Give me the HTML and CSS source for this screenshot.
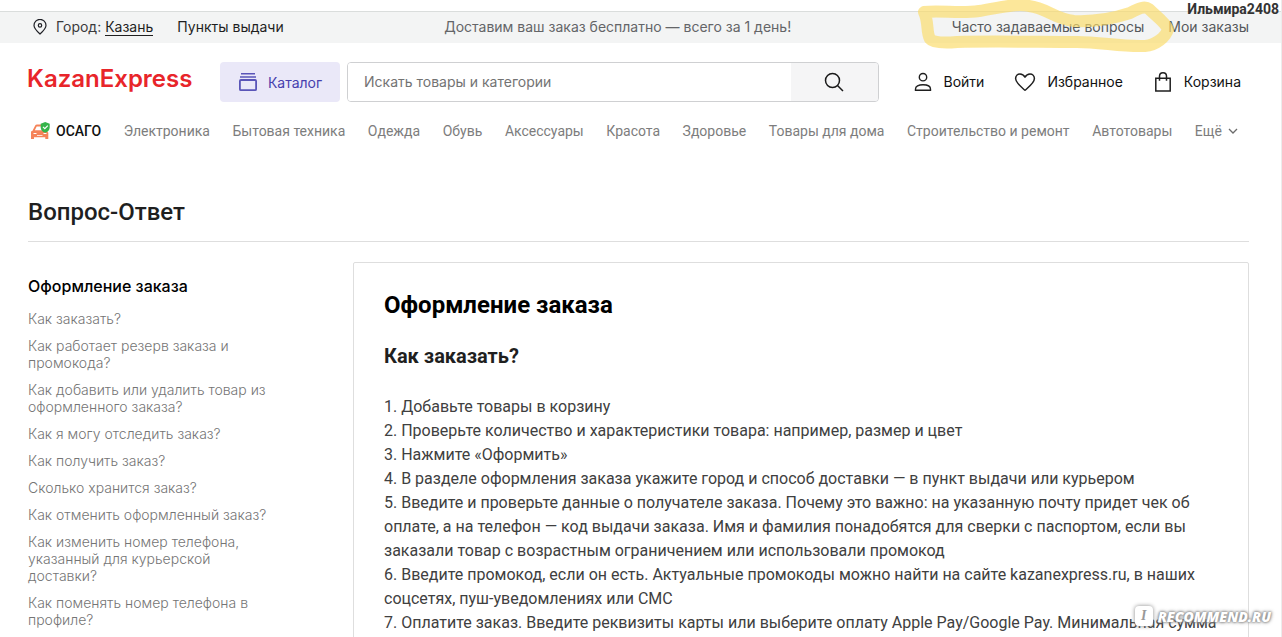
FILE: index.html
```html
<!DOCTYPE html>
<html lang="ru">
<head>
<meta charset="utf-8">
<title>Вопрос-Ответ — KazanExpress</title>
<link rel="stylesheet" href="styles.css">
</head>
<body>
<div class="page">
  <div class="topbar">
    <div class="topbar-left">
      <svg class="pin" width="14" height="16" viewBox="0 0 14 16" fill="none" stroke="#1f2026" stroke-width="1.2"><path d="M7 15C3.6 11.8 1 9.2 1 6.4a6 6 0 0 1 12 0C13 9.2 10.400 11.8 7 15z"/><circle cx="7" cy="6.400" r="1.700"/></svg>
      <span class="city">Город: <a href="#">Казань</a></span>
      <a href="#" class="points">Пункты выдачи</a>
    </div>
    <span class="promo">Доставим ваш заказ бесплатно — всего за 1 день!</span>
    <div class="topbar-right">
      <a href="#">Часто задаваемые вопросы</a>
      <a href="#">Мои заказы</a>
    </div>
  </div>

  <header class="header">
    <a href="#" class="logo">KazanExpress</a>
    <button class="catalog" type="button">
      <svg width="20" height="20" viewBox="0 0 20 20" fill="none" stroke="#5a55b8"><path d="M3 1.700h14M2 5h16" stroke-width="1.600"/><rect x="1.900" y="8" width="16.200" height="10.200" rx="1" stroke-width="1.800"/></svg>
      Каталог
    </button>
    <form class="search">
      <input type="text" aria-label="Поиск" placeholder="Искать товары и категории">
      <button type="button" aria-label="Найти">
        <svg width="20" height="20" viewBox="0 0 20 20" fill="none" stroke="#1a1a1a" stroke-width="1.500"><circle cx="8.500" cy="8.500" r="7"/><path d="M13.500 13.500l5.500 5.500"/></svg>
      </button>
    </form>
    <div class="actions">
      <a href="#"><svg width="20" height="20" viewBox="0 0 20 20" fill="none" stroke="#1f1f1f" stroke-width="1.400"><circle cx="10" cy="5.200" r="3.700"/><path d="M2.500 18.300v-1.200c0-2.600 3-4.300 7.500-4.300s7.500 1.700 7.500 4.300v1.200z"/></svg>Войти</a>
      <a href="#"><svg width="22" height="20" viewBox="0 0 22 20" fill="none" stroke="#1f1f1f" stroke-width="1.500" stroke-linejoin="round"><path d="M11 18.300C7 14.800 1.600 11 1.600 6.600 1.600 3.800 3.600 2 6 2c2.100 0 3.900 1.200 5 3.200C12.100 3.200 13.900 2 16 2c2.400 0 4.400 1.800 4.400 4.600C20.400 11 15 14.800 11 18.300z"/></svg>Избранное</a>
      <a href="#"><svg width="20" height="22" viewBox="0 0 20 22" fill="none" stroke="#1f1f1f" stroke-width="1.500"><path d="M2.800 7.200h14.400V20H2.800z"/><path d="M6.500 9.700V5.300C6.500 3.300 8 1.800 10 1.800s3.500 1.500 3.500 3.500v4.400"/></svg>Корзина</a>
    </div>
  </header>

  <nav class="nav">
    <a href="#" class="osago"><svg width="20" height="18" viewBox="0 0 20 18"><path d="M1 9.500l1.500-.8L5.200 3.500Q5.700 2.500 7 2.500h6l3.500 6.200 1.800 2V17h-3v-1.700H4V17H1z" fill="#f58359"/><path d="M4.800 8.300L6.700 4.500h6l2.300 3.800z" fill="#fff"/><path d="M3.500 11h3v1h-3zM13.500 11h3v1h-3zM7 13h5.500v.8H7z" fill="#fff"/><path d="M15.200 0l4.500 1.700v3.500c0 2.800-1.800 4.500-4.500 5.600-2.700-1.100-4.500-2.800-4.500-5.600V1.700z" fill="#35b44a"/><path d="M13 4.900l1.800 1.800 3-3" fill="none" stroke="#fff" stroke-width="1.200"/></svg>ОСАГО</a>
    <a href="#">Электроника</a>
    <a href="#">Бытовая техника</a>
    <a href="#">Одежда</a>
    <a href="#">Обувь</a>
    <a href="#">Аксессуары</a>
    <a href="#">Красота</a>
    <a href="#">Здоровье</a>
    <a href="#">Товары для дома</a>
    <a href="#">Строительство и ремонт</a>
    <a href="#">Автотовары</a>
    <button type="button" class="more">Ещё <svg width="10" height="8" viewBox="0 0 10 8" fill="none" stroke="#6b6b6b" stroke-width="1.300"><path d="M1 2l4 4 4-4"/></svg></button>
  </nav>

  <main class="main">
    <h1>Вопрос-Ответ</h1>
    <div class="columns">
      <aside class="sidebar">
        <h2>Оформление заказа</h2>
        <ul>
          <li><a href="#">Как заказать?</a></li>
          <li><a href="#">Как работает резерв заказа и промокода?</a></li>
          <li><a href="#">Как добавить или удалить товар из оформленного заказа?</a></li>
          <li><a href="#">Как я могу отследить заказ?</a></li>
          <li><a href="#">Как получить заказ?</a></li>
          <li><a href="#">Сколько хранится заказ?</a></li>
          <li><a href="#">Как отменить оформленный заказ?</a></li>
          <li><a href="#">Как изменить номер телефона, указанный для курьерской доставки?</a></li>
          <li><a href="#">Как поменять номер телефона в профиле?</a></li>
        </ul>
      </aside>
      <article class="card">
        <h2>Оформление заказа</h2>
        <h3>Как заказать?</h3>
        <ol>
          <li>1. Добавьте товары в корзину</li>
          <li>2. Проверьте количество и характеристики товара: например, размер и цвет</li>
          <li>3. Нажмите «Оформить»</li>
          <li>4. В разделе оформления заказа укажите город и способ доставки — в пункт выдачи или курьером</li>
          <li>5. Введите и проверьте данные о получателе заказа. Почему это важно: на указанную почту придет чек об оплате, а на телефон — код выдачи заказа. Имя и фамилия понадобятся для сверки с паспортом, если вы заказали товар с возрастным ограничением или использовали промокод</li>
          <li>6. Введите промокод, если он есть. Актуальные промокоды можно найти на сайте kazanexpress.ru, в наших соцсетях, пуш-уведомлениях или СМС</li>
          <li>7. Оплатите заказ. Введите реквизиты карты или выберите оплату Apple Pay/Google Pay. Минимальная сумма</li>
        </ol>
      </article>
    </div>
  </main>

  <svg class="marker" width="260" height="60" viewBox="0 0 260 60" fill="none" stroke="#fbdc6a" stroke-opacity=".68" stroke-width="12" stroke-linejoin="round"><path d="M7 12C25 10 42 14 62 11C82 8 98 3 112 6C130 8 137 19 157 21C180 22 198 18 213 13C222 8 228 6 232 9C239 16 248 22 251 29C249 37 239 45 228 46C204 47 184 42 160 42C122 42 76 41 40 42C28 43 16 43 13 39C9 32 12 22 7 12z"/></svg>
  <span class="author">Ильмира2408</span>
  <div class="watermark"><span class="watermark-badge">I</span>RECOMMEND.RU</div>
</div>
</body>
</html>
```
FILE: styles.css
```css
* { box-sizing: border-box; }
body {
  margin: 0;
  font-family: Inter, "Liberation Sans", sans-serif;
  font-size: 14px;
  color: #1f1f1f;
  background: #fff;
}
a { color: inherit; text-decoration: none; }
h1, h2, h3, ul, ol { margin: 0; padding: 0; }
ul, ol { list-style: none; }
button { font: inherit; color: inherit; border: 0; padding: 0; background: none; }
svg { flex: none; }

.page {
  position: relative;
  height: 100vh;
  overflow: hidden;
  padding-top: 11px;
  border-right: 1px solid #ececec;
}

.topbar {
  display: flex;
  justify-content: space-between;
  align-items: center;
  height: 32px;
  padding: 0 32px 2px 33px;
  border-top: 1px solid #dadddc;
  background: #f3f4f4;
}
.topbar-left { display: flex; align-items: center; }
.city { margin-left: 9px; color: #3a3a3c; }
.city a { color: #1f1f1f; border-bottom: 1px solid #1f1f1f; }
.points { margin-left: 24px; }
.promo { color: #646568; }
.topbar-right { display: flex; justify-content: flex-end; gap: 24px; color: #55585b; }

.header {
  display: flex;
  align-items: center;
  padding: 19px 40px 0 27px;
}
.logo {
  width: 193px;
  padding-bottom: 6px;
  font-size: 24px;
  line-height: 32px;
  font-weight: 600;
  color: #e8252a;
}
.catalog {
  display: flex;
  align-items: center;
  justify-content: center;
  gap: 10px;
  width: 120px;
  height: 40px;
  border-radius: 4px;
  background: #eae8f8;
  color: #463fae;
}
.search {
  display: flex;
  flex: 1;
  height: 40px;
  margin-left: 7px;
  border: 1px solid #cfd0d2;
  border-radius: 4px;
  overflow: hidden;
}
.search input {
  flex: 1;
  min-width: 0;
  padding: 0 16px 2px;
  border: 0;
  font: inherit;
  background: #fff;
}
.search input::placeholder { color: #737373; }
.search button {
  display: flex;
  align-items: center;
  justify-content: center;
  width: 87px;
  background: #f5f5f6;
}
.actions { display: flex; gap: 30px; margin-left: 34px; padding-bottom: 1px; }
.actions a { display: flex; align-items: center; gap: 11px; color: #111; }

.nav {
  display: flex;
  align-items: center;
  justify-content: space-between;
  padding: 17px 43px 0 30px;
  font-family: Roboto, sans-serif;
  line-height: 24px;
  color: #7d7d7d;
}
.osago {
  display: flex;
  align-items: center;
  gap: 6px;
  font-weight: 500;
  color: #111;
}
.more { display: flex; align-items: center; gap: 6px; }

.main { padding: 53px 32px 0 28px; }
h1 {
  padding-bottom: 13px;
  border-bottom: 1px solid #dedede;
  font-family: Roboto, sans-serif;
  font-size: 24px;
  line-height: 32px;
  font-weight: 500;
}
.columns {
  display: grid;
  grid-template-columns: 250px 1fr;
  gap: 75px;
  padding-top: 20px;
}
.sidebar { padding-top: 14px; }
.sidebar h2 {
  margin-bottom: 14px;
  font-size: 16px;
  line-height: 20px;
  font-weight: 500;
  color: #000;
}
.sidebar ul { display: flex; flex-direction: column; gap: 10px; }
.sidebar li { line-height: 17px; font-weight: 300; color: #757575; }

.card {
  padding: 26px 30px;
  border: 1px solid #dedede;
  border-radius: 2px;
  font-family: Roboto, sans-serif;
}
.card h2 { font-size: 24px; line-height: 32px; font-weight: 700; color: #000; }
.card h3 { margin: 22px 0 26px; font-size: 20px; line-height: 26px; font-weight: 700; }
.card ol { font-size: 16px; line-height: 24px; color: #404040; }

.marker { position: absolute; left: 917px; top: 0; }
.author {
  position: absolute;
  right: 2px;
  top: 1px;
  font-family: Roboto, sans-serif;
  font-weight: 700;
  line-height: 17px;
  color: #333;
}
.watermark {
  position: absolute;
  right: 10px;
  bottom: 11px;
  display: flex;
  align-items: center;
  gap: 5px;
  font-family: "Open Sans", sans-serif;
  font-style: italic;
  font-weight: 800;
  color: #fff;
  text-shadow: 0 0 2px #888, 0 0 3px #888, 0 0 4px #999;
}
.watermark-badge {
  width: 18px;
  border-radius: 4px;
  background: #fff;
  box-shadow: 0 0 4px #888;
  font-family: "Liberation Serif", serif;
  line-height: 20px;
  text-align: center;
  color: #999;
  text-shadow: none;
}
```
